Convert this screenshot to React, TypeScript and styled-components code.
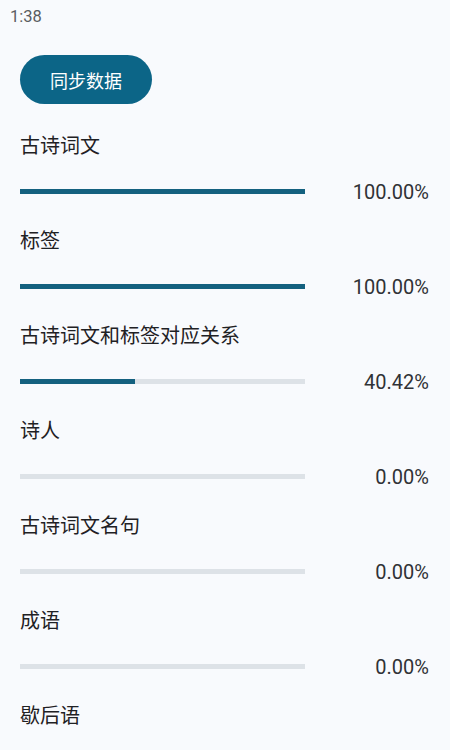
import React from 'react'
import styled, { createGlobalStyle } from 'styled-components'

const GlobalStyle = createGlobalStyle`
body {
    margin: 0;
    background: #f8fafd;
    font-family: Roboto, "Noto Sans CJK SC", sans-serif;
}
`

const Screen = styled.div`
width: 450px;
min-height: 750px;
background: #f8fafd;
overflow: hidden;
`

const StatusBar = styled.div`
height: 32px;
padding-left: 10px;
display: flex;
align-items: center;
font-size: 16.5px;
color: #5a5d61;
`

const Content = styled.div`
display: flex;
flex-direction: column;
padding: 23px 21px 0 20px;
`

const SyncButton = styled.button`
width: 132px;
height: 49px;
border: none;
border-radius: 25px;
background: #0c6587;
color: #fff;
font-family: "Noto Sans CJK SC", sans-serif;
font-size: 18px;
cursor: pointer;
margin-bottom: 26px;
`

const Section = styled.div`
display: flex;
flex-direction: column;
gap: 16px;
margin-bottom: 19px;
`

const Label = styled.div`
height: 30px;
line-height: 30px;
font-family: "Noto Sans CJK SC", sans-serif;
font-size: 20px;
color: #1f2124;
`

const ProgressRow = styled.div`
height: 30px;
display: flex;
align-items: center;
`

const Track = styled.div`
width: 285px;
height: 5px;
background: #dde2e7;
`

const Fill = styled.div`
height: 100%;
background: #14617f;
`

const Percent = styled.div`
flex: 1;
text-align: right;
font-size: 20px;
color: #303236;
padding-top: 2px;
`

interface Item {
    name: string
    value?: number
}

const items: Item[] = [
    { name: '古诗词文', value: 100 },
    { name: '标签', value: 100 },
    { name: '古诗词文和标签对应关系', value: 40.42 },
    { name: '诗人', value: 0 },
    { name: '古诗词文名句', value: 0 },
    { name: '成语', value: 0 },
    { name: '歇后语' },
]

const App: React.FC = () => {
    return (
        <Screen>
            <GlobalStyle />
            <StatusBar>1:38</StatusBar>
            <Content>
                <SyncButton>同步数据</SyncButton>
                {items.map(item => (
                    <Section key={item.name}>
                        <Label>{item.name}</Label>
                        {item.value !== undefined && (
                            <ProgressRow>
                                <Track>
                                    <Fill style={{ width: `${item.value}%` }} />
                                </Track>
                                <Percent>{item.value.toFixed(2)}%</Percent>
                            </ProgressRow>
                        )}
                    </Section>
                ))}
            </Content>
        </Screen>
    )
}

export default App
